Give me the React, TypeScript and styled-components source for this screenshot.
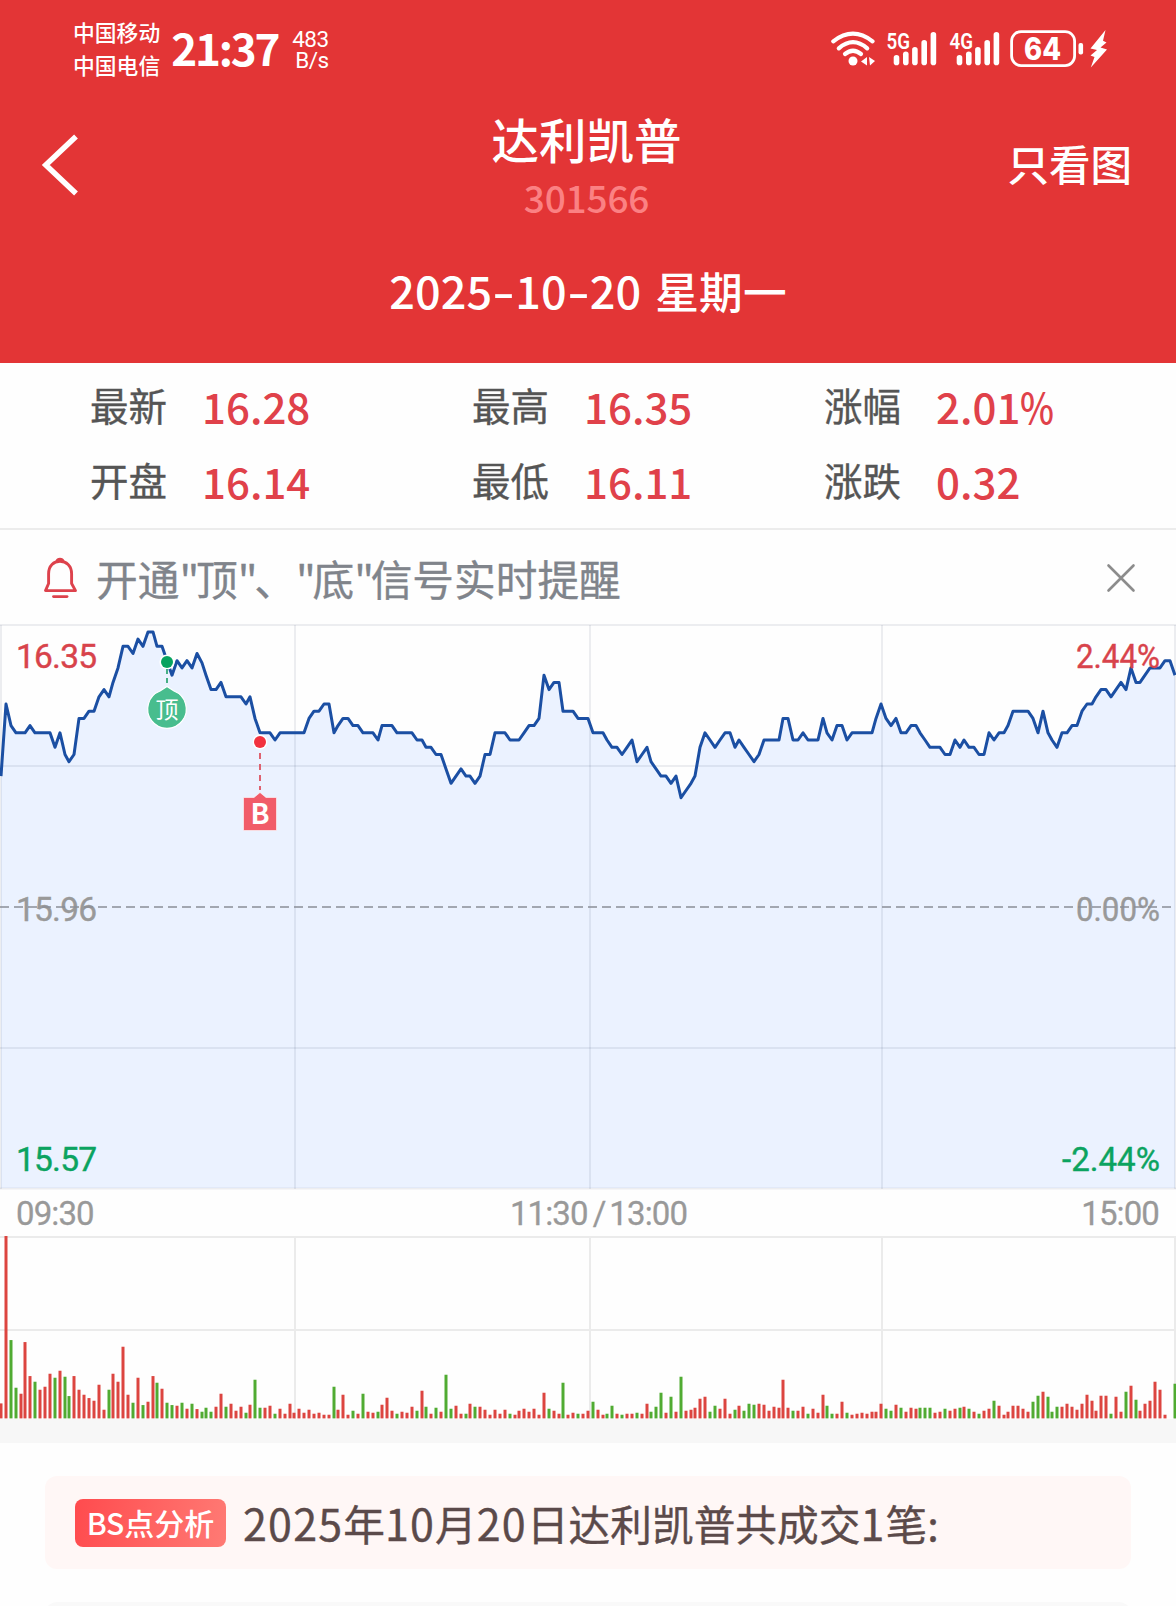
import React from "react";
import styled, { createGlobalStyle } from "styled-components";

const cjk = `"Noto Sans CJK SC", "Noto Sans", sans-serif`;

const Global = createGlobalStyle`
  * { box-sizing: border-box; }
  body { margin: 0; background: #fdfdfd; font-family: ${cjk}; font-weight: 500; }
  svg { display: block; flex: none; }
`;

const Screen = styled.div`
  width: 1176px;
  height: 1606px;
  overflow: hidden;
  background: #fefefe;
`;

const Header = styled.header`
  height: 363px;
  background: #e33536;
  color: #fff;
`;

const StatusBar = styled.div`
  display: flex;
  justify-content: space-between;
  height: 98px;
  padding: 0 68px 0 73px;
`;

const StatusSide = styled.div`
  display: flex;
  align-items: center;
  height: 98px;
`;

const Carriers = styled.div`
  font-size: 21.8px;
  line-height: 33px;
  padding-bottom: 3px;
`;

const Clock = styled.div`
  width: 108px;
  margin-left: 11px;
  padding-bottom: 4px;
  font-size: 44px;
  line-height: 94px;
  font-weight: 700;
  letter-spacing: -2.2px;
  white-space: nowrap;
`;

const NetSpeed = styled.div`
  margin-left: 13px;
  font-family: Roboto, sans-serif;
  font-size: 22.5px;
  font-weight: 400;
  line-height: 21px;
  text-align: right;
  letter-spacing: -0.5px;
  padding-top: 2px;
`;

const NavBar = styled.div`
  display: grid;
  grid-template-columns: 200px 1fr 200px;
  height: 134px;
  padding: 0 44px 0 41px;
`;

const BackButton = styled.div`
  padding-top: 36px;
`;

const Titles = styled.div`
  display: flex;
  flex-direction: column;
  align-items: center;
`;

const StockName = styled.div`
  font-size: 47.5px;
  line-height: 58px;
  padding-top: 12px;
`;

const StockCode = styled.div`
  font-size: 37px;
  line-height: 50px;
  padding-top: 4px;
  color: #fb8183;
  letter-spacing: -0.2px;
`;

const ChartOnly = styled.div`
  text-align: right;
  font-size: 41.5px;
  line-height: 60px;
  padding-top: 35px;
`;

const DateLine = styled.div`
  display: flex;
  justify-content: center;
  height: 116px;
  font-size: 45px;
  line-height: 116px;
  white-space: pre;
  letter-spacing: 0.1px;
`;

const Hyphen = styled.span`
  width: 23px;
  text-align: center;
  transform: scaleX(1.4);
`;

const Weekday = styled.span`
  font-size: 43.7px;
  margin-left: 14px;
`;

const Stats = styled.section`
  display: grid;
  grid-template-columns: 382px 352px 1fr;
  grid-auto-rows: 75px;
  height: 167px;
  padding: 3px 0 0 90px;
  border-bottom: 2px solid #ececec;
`;

const Stat = styled.div`
  display: flex;
  align-items: center;
`;

const StatLabel = styled.span`
  width: 112px;
  font-size: 38.5px;
  font-weight: 400;
  color: #555;
  -webkit-text-stroke: 0.35px #555;
`;

const StatValue = styled.span`
  font-size: 42px;
  color: #e0414a;
  padding-top: 3px;
`;

const Percent = styled.span`
  display: inline-block;
  width: 33px;
  transform: scaleX(0.86);
  transform-origin: left;
`;

const Notice = styled.section`
  display: flex;
  align-items: center;
  height: 94px;
  padding: 1px 40px 0 43px;
`;

const NoticeText = styled.div`
  flex: 1;
  margin-left: 18px;
  font-size: 41.7px;
  font-weight: 400;
  color: #80848b;
  -webkit-text-stroke: 0.35px #80848b;
`;

const Quote = styled.span`
  letter-spacing: -3.2px;
`;

const AxisText = styled.text<{ $tone: string }>`
  font-family: Roboto, sans-serif;
  font-size: 33.5px;
  font-weight: 400;
  fill: ${(p) => p.$tone};
  stroke: ${(p) => p.$tone};
  stroke-width: 0.4px;
`;

const TimeAxis = styled.div`
  display: grid;
  grid-template-columns: 1fr auto 1fr;
  height: 46px;
  padding: 0 17px 0 16px;
  font-family: Roboto, sans-serif;
  font-size: 33px;
  font-weight: 400;
  line-height: 48px;
  letter-spacing: -0.9px;
  color: #999;
  -webkit-text-stroke: 0.3px #999;
`;

const TimeMark = styled.span<{ $align?: string; $shift?: number }>`
  text-align: ${(p) => p.$align || "left"};
  padding-left: ${(p) => p.$shift || 0}px;
`;

const Slash = styled.span`
  padding: 0 4px 0 5px;
`;

const Divider = styled.div`
  height: 24px;
  background: #f7f7f7;
`;

const Analysis = styled.section`
  display: flex;
  flex-direction: column;
  gap: 33px;
  padding: 33px 45px 0;
`;

const Card = styled.div<{ $muted?: boolean }>`
  display: flex;
  flex: none;
  align-items: center;
  height: 93px;
  padding: 0 30px;
  border-radius: 12px;
  background: ${(p) => (p.$muted ? "#f9f9f9" : "#fff7f6")};
`;

const Badge = styled.span`
  width: 151px;
  height: 48px;
  line-height: 47px;
  border-radius: 8px;
  text-align: center;
  font-size: 30px;
  color: #fff;
  background: linear-gradient(100deg, #ff4b4e, #ff7a74);
`;

const CardText = styled.span`
  margin-left: 17px;
  padding-bottom: 2px;
  font-size: 41.7px;
  font-weight: 400;
  color: #5b4a4a;
  white-space: nowrap;
  -webkit-text-stroke: 0.35px #5b4a4a;
`;

const Figure = styled.span`
  font-size: 43px;
  letter-spacing: 1.2px;
`;

/* Minute prices, in cents below the day's peak close. */
const drops = [
  20, 10, 13, 14, 14, 14, 13, 14, 14, 14, 14, 16, 14, 17, 18, 17, 12, 12, 11, 11,
  9, 8, 9, 7, 5, 2, 2, 3, 1, 2, 0, 0, 2, 2, 4, 6, 4, 5, 4, 5,
  3, 4.3, 6, 8, 8, 7, 9, 9, 9, 9, 10, 9, 12, 14, 14, 14, 15, 14, 14, 14,
  14, 14, 14, 12, 11, 11, 10, 10, 14, 13, 12, 12, 13, 13, 14, 14, 14, 15, 13, 13,
  13, 14, 14, 14, 14, 15, 15, 16, 16, 17, 17, 19, 21, 20, 19, 20, 20, 21, 20, 17,
  17, 14, 14, 14, 15, 15, 15, 14, 13, 13, 12, 6, 8, 7, 7, 11, 11, 11, 12, 12,
  12, 14, 14, 14, 15, 16, 16, 17, 16, 15, 18, 17, 16, 18, 19, 20, 20, 21, 20, 23,
  22, 21, 20, 16, 14, 15, 16, 15, 14, 14, 16, 15, 16, 17, 18, 17, 15, 15, 15, 15,
  12, 12, 15, 15, 14, 15, 15, 15, 12, 14, 15, 13, 13, 15, 14, 14, 14, 14, 14, 12,
  10, 12, 13, 12, 14, 14, 13, 13, 14, 15, 16, 16, 16, 17, 17, 15, 16, 15, 16, 16,
  17, 17, 14, 15, 14, 14, 13, 11, 11, 11, 11, 12, 14, 11, 14, 15, 16, 14, 14, 13,
  13, 11, 10, 10, 9, 8, 8, 9, 8, 7, 8, 5, 7, 7, 6, 5, 5, 5, 4, 4, 6,
];

/* Minute volumes: r = up tick, g = down tick. */
const volumes = `r45 r549 g235 g92 r74 r229 r127 g110 r86 r95 r134 g122 r143 g125 g67 r127 r86 r71 r61 r53
r101 r26 g86 r134 r110 r215 r71 g47 r122 g40 r50 r127 g107 r89 g47 g40 r38 g47 r29 g44
r28 g20 g32 g20 r35 r74 g35 r44 r23 r35 g17 r41 g116 g32 r32 r38 g14 r29 r14 r44
r17 r29 r17 r26 r14 r17 r11 r11 g95 r26 r71 r11 g23 r14 g74 r20 r17 g20 r41 r62
r23 g14 r20 r17 r35 g23 r83 g35 r14 g32 r20 g131 g29 r38 r14 g14 r44 g35 r35 r26
r11 r26 r14 r26 g14 r11 r23 r29 r20 r29 r11 r77 g29 r23 r14 g107 r11 r17 g14 r14
r23 g50 r26 r11 g14 g38 r14 g11 r14 r14 g17 r14 r44 g20 g35 g77 r17 g65 r20 g125
r23 r26 r32 r59 r65 g20 g38 r29 r59 r14 g26 r38 g23 g44 g41 r44 r41 r23 r35 r32
r116 r32 g23 r23 r35 g14 r29 r17 r71 g38 g14 r14 r50 g17 r11 r14 r17 r14 r20 r20
r44 g29 g23 r41 g32 r20 r32 r29 g32 g32 g32 r17 r20 g29 r23 r29 g32 r35 g29 r20
g14 r23 r29 g53 r38 r11 r20 r38 r38 r29 r20 g50 g68 r80 g65 g20 g35 r35 r44 r35
r26 r44 r71 r53 r23 r68 r68 g14 r65 r20 g80 r98 g56 r23 r44 r53 r110 r86 r11 r0 g104`
  .split(/\s+/)
  .map((v) => ({ up: v[0] === "r", size: Number(v.slice(1)) / 3 }));

const minuteX = (i: number) => Math.round(1 + i * 4.8905);
const linePoints = drops.map((d, i) => `${minuteX(i)},${(631.9 + d * 7.21).toFixed(1)}`).join(" ");
const columns = [1, 295, 590, 882, 1175];

function PriceChart() {
  return (
    <svg width="1176" height="566" viewBox="0 624 1176 566">
      <polygon points={`1,1188 ${linePoints} 1175,1188`} fill="#ebf2ff" />
      <g stroke="#1a2a4a" strokeOpacity="0.08" strokeWidth="2">
        {columns.map((x) => <line key={x} x1={x} x2={x} y1="625" y2="1189" />)}
        {[625, 766, 1048, 1188.5].map((y) => <line key={y} x1="0" x2="1176" y1={y} y2={y} />)}
      </g>
      <polyline points={linePoints} fill="none" stroke="#1b4fa3" strokeWidth="3" strokeLinejoin="round" />
      <AxisText $tone="#d8434b" x="16" y="668" textLength="81">16.35</AxisText>
      <AxisText $tone="#d8434b" x="1076" y="668" textLength="84" lengthAdjust="spacingAndGlyphs">2.44%</AxisText>
      <AxisText $tone="#999" x="16" y="921" textLength="81">15.96</AxisText>
      <AxisText $tone="#999" x="1076" y="921" textLength="84" lengthAdjust="spacingAndGlyphs">0.00%</AxisText>
      <line x1="0" x2="1176" y1="907" y2="907" stroke="#8b8f98" strokeWidth="1.6" strokeDasharray="9 5" />
      <AxisText $tone="#0ba360" x="16" y="1171" textLength="81">15.57</AxisText>
      <AxisText $tone="#0ba360" x="1062" y="1171" textLength="98" lengthAdjust="spacingAndGlyphs">-2.44%</AxisText>

      <circle cx="167" cy="662" r="7.6" fill="#fff" />
      <circle cx="167" cy="662" r="6" fill="#07a35f" />
      <line x1="167" x2="167" y1="669" y2="687" stroke="#35a878" strokeWidth="1.8" strokeDasharray="5 4" />
      <path d="M160 691 L167 686.5 L174 691 A19.3 19.3 0 1 1 160 691 Z" fill="#48bd8e" stroke="#fff" strokeWidth="1.2" />
      <text x="167" y="717.5" textAnchor="middle" fontSize="23" fontWeight="400" fill="#fff">顶</text>

      <circle cx="260" cy="742" r="7.4" fill="#fff" />
      <circle cx="260" cy="742" r="6" fill="#f2323f" />
      <line x1="260" x2="260" y1="753" y2="790" stroke="#dd5361" strokeWidth="1.8" strokeDasharray="6 5" />
      <path d="M243.5 797.5 H254 L260 792.5 L266 797.5 H276.5 V830.5 H243.5 Z" fill="#f15c69" stroke="#fff" strokeWidth="0.6" />
      <text x="260" y="824" textAnchor="middle" fontSize="28" fontWeight="700" fill="#fff">B</text>
    </svg>
  );
}

function VolumeChart() {
  return (
    <svg width="1176" height="183" viewBox="0 1236 1176 183">
      <g stroke="#ebebeb" strokeWidth="2">
        {columns.slice(1).map((x) => <line key={x} x1={x} x2={x} y1="1236" y2="1419" />)}
        <line x1="0" x2="1176" y1="1237" y2="1237" />
        <line x1="0" x2="1176" y1="1330" y2="1330" />
      </g>
      {volumes.map((v, i) =>
        v.size > 0 ? (
          <rect key={i} x={minuteX(i) - 1.5} y={1418.4 - v.size} width="3" height={v.size} fill={v.up ? "#dc4540" : "#50ab32"} />
        ) : null
      )}
    </svg>
  );
}

function WifiIcon() {
  return (
    <svg width="46" height="38" viewBox="830 31 46 38" fill="none" stroke="#fff" strokeWidth="4.2" strokeLinecap="round">
      <path d="M833.3 42.3 Q853 27 872.5 42.3" />
      <path d="M838.8 49.3 Q853 37 867.2 49.3" />
      <path d="M845 55 Q853 48.5 861 55" />
      <circle cx="853" cy="62" r="4.5" fill="#fff" stroke="none" />
      <path d="M861 62.5 L867 58 V66.5 Z M869 58 L875 62 L870 66.5 Z" fill="#fff" stroke="none" />
    </svg>
  );
}

function Signal({ label }: { label: string }) {
  const bars = [[11.5, 56], [20.8, 52.5], [29.9, 48], [39.2, 41], [48.4, 33]];
  return (
    <svg width="62.3" height="46" viewBox="0 27 62.3 46" fill="#fff">
      <text x="1.5" y="49.8" fontFamily="Roboto, sans-serif" fontSize="22.5" fontWeight="600" textLength="23.5" lengthAdjust="spacingAndGlyphs">{label}</text>
      {bars.map(([x, y]) => <rect key={x} x={x - 2.8} y={y} width="5.6" height={66.3 - y} rx="2.8" />)}
    </svg>
  );
}

function Battery() {
  return (
    <svg width="98" height="38" viewBox="1011 31 98 38" fill="#fff">
      <rect x="1012.6" y="32.6" width="63" height="34" rx="9.5" fill="none" stroke="#fff" strokeWidth="2.8" />
      <rect x="1079.5" y="44" width="4.6" height="11.5" rx="2" />
      <text x="1025" y="61" fontFamily="Inter, sans-serif" fontSize="31" fontWeight="800" textLength="37" lengthAdjust="spacingAndGlyphs">64</text>
      <path d="M1106.5 31 L1091.5 49.5 L1098 51 L1091.5 56.5 L1095.5 58 L1091.8 68.5 L1108 50.5 L1101.5 48.5 L1107.5 43.5 L1104 41.8 Z" />
    </svg>
  );
}

function BellIcon() {
  return (
    <svg width="35" height="42" viewBox="43 557 35 42" fill="none" stroke="#dd424c" strokeWidth="2.9" strokeLinejoin="round" strokeLinecap="round">
      <path d="M56.8 561.5 A3.4 3.4 0 0 1 63.2 561.5" fill="#dd424c" />
      <path d="M45.5 590.6 L48.6 583.5 V573.8 C48.6 565.5 53.8 561.3 60 561.3 S71.6 565.5 71.6 573.8 V583.5 L75.5 590.6 Z" />
      <path d="M53.5 596.6 H67" />
    </svg>
  );
}

const stats = [
  ["最新", "16.28"], ["最高", "16.35"], ["涨幅", "2.01%"],
  ["开盘", "16.14"], ["最低", "16.11"], ["涨跌", "0.32"],
];

export default function App() {
  return (
    <Screen>
      <Global />
      <Header>
        <StatusBar>
          <StatusSide>
            <Carriers>
              <div>中国移动</div>
              <div>中国电信</div>
            </Carriers>
            <Clock>21:37</Clock>
            <NetSpeed>
              <div>483</div>
              <div>B/s</div>
            </NetSpeed>
          </StatusSide>
          <StatusSide>
            <WifiIcon />
            <svg width="9.5" height="1" />
            <Signal label="5G" />
            <Signal label="4G" />
            <Battery />
          </StatusSide>
        </StatusBar>
        <NavBar>
          <BackButton>
            <svg width="38" height="62" viewBox="41 134 38 62" fill="none" stroke="#fff" strokeWidth="5.5">
              <path d="M76 136.5 L45.8 165 L76 193.5" />
            </svg>
          </BackButton>
          <Titles>
            <StockName>达利凯普</StockName>
            <StockCode>301566</StockCode>
          </Titles>
          <ChartOnly>只看图</ChartOnly>
        </NavBar>
        <DateLine>
          2025<Hyphen>-</Hyphen>10<Hyphen>-</Hyphen>20<Weekday>星期一</Weekday>
        </DateLine>
      </Header>
      <Stats>
        {stats.map(([label, value]) => (
          <Stat key={label}>
            <StatLabel>{label}</StatLabel>
            <StatValue>
              {value.replace("%", "")}
              {value.endsWith("%") && <Percent>%</Percent>}
            </StatValue>
          </Stat>
        ))}
      </Stats>
      <Notice>
        <BellIcon />
        <NoticeText>
          开通<Quote>"</Quote>顶<Quote>"</Quote>、<Quote>"</Quote>底<Quote>"</Quote>信号实时提醒
        </NoticeText>
        <svg width="30" height="30" viewBox="0 0 30 30" stroke="#8c8c8c" strokeWidth="2.6" strokeLinecap="round">
          <path d="M2.5 2.5 L27.5 27.5 M27.5 2.5 L2.5 27.5" />
        </svg>
      </Notice>
      <PriceChart />
      <TimeAxis>
        <TimeMark>09:30</TimeMark>
        <TimeMark $shift={22}>11:30<Slash>/</Slash>13:00</TimeMark>
        <TimeMark $align="right">15:00</TimeMark>
      </TimeAxis>
      <VolumeChart />
      <Divider />
      <Analysis>
        <Card>
          <Badge>BS点分析</Badge>
          <CardText>
            <Figure>2025</Figure>年<Figure>10</Figure>月<Figure>20</Figure>日达利凯普共成交<Figure>1</Figure>笔:
          </CardText>
        </Card>
        <Card $muted />
      </Analysis>
    </Screen>
  );
}
